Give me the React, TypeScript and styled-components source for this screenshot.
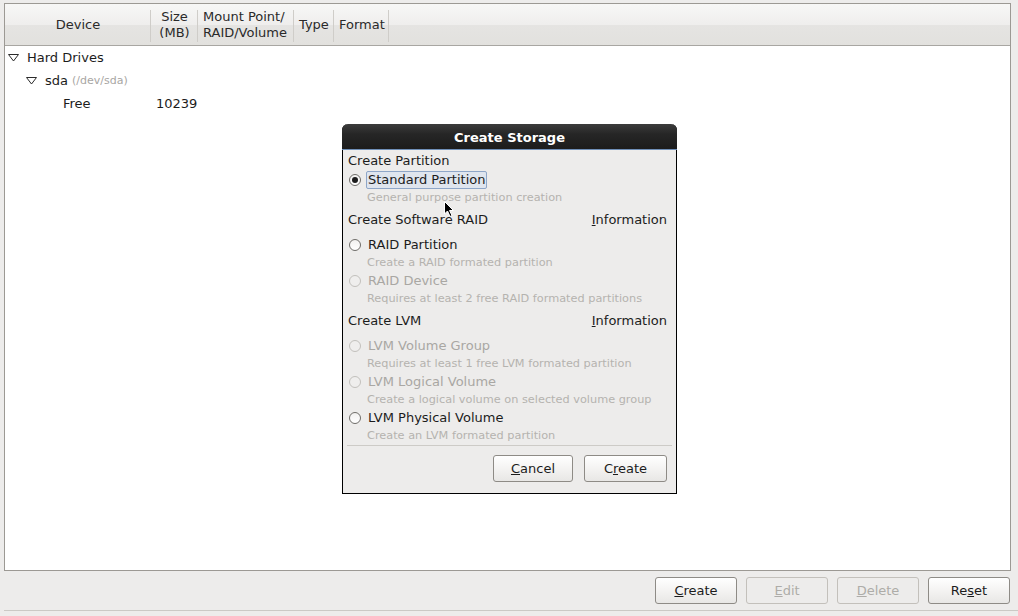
import styled, { createGlobalStyle } from "styled-components";

const GlobalStyle = createGlobalStyle`
  html, body {
    margin: 0;
    padding: 0;
    background: #edeceb;
    font-family: "DejaVu Sans", "Liberation Sans", sans-serif;
    font-size: 13px;
    color: #1c1c1c;
  }
`;

const Screen = styled.div`
  position: relative;
  width: 1018px;
  height: 616px;
  display: flex;
  flex-direction: column;
  overflow: hidden;
`;

const TreeFrame = styled.div`
  flex: 1;
  margin: 3px 7px 0 4px;
  border: 1px solid #9c9994;
  background: #fff;
  display: flex;
  flex-direction: column;
`;

const Header = styled.div`
  height: 41px;
  display: flex;
  background: linear-gradient(#f7f7f6, #efeeed 50%, #e5e4e2 52%, #e2e1de);
  border-bottom: 1px solid #a8a6a2;
`;

const HeaderCell = styled.div<{ $w: number; $center?: boolean }>`
  position: relative;
  width: ${(p) => p.$w}px;
  display: flex;
  flex-direction: column;
  justify-content: center;
  align-items: ${(p) => (p.$center ? "center" : "flex-start")};
  padding-left: ${(p) => (p.$center ? 0 : 5)}px;
  box-sizing: border-box;
  line-height: 16px;
  color: #2a2a2a;
  &::after {
    content: "";
    position: absolute;
    right: 0;
    top: 6px;
    bottom: 3px;
    width: 1px;
    background: #cfcdc9;
  }
`;

const TreeRow = styled.div<{ $indent: number }>`
  height: 23px;
  display: flex;
  align-items: center;
  padding-left: ${(p) => p.$indent}px;
`;

const Expander = styled.svg`
  width: 11px;
  height: 8px;
  margin-right: 8px;
`;

const Cell = styled.span<{ $w?: number }>`
  display: inline-block;
  width: ${(p) => (p.$w ? `${p.$w}px` : "auto")};
`;

const DevPath = styled.span`
  color: #a8a6a3;
  font-size: 11px;
  margin-left: 4px;
`;

const Footer = styled.div`
  height: 40px;
  margin: 0 0 5px 4px;
  padding: 6px 8px 0 0;
  box-sizing: border-box;
  display: flex;
  justify-content: flex-end;
  align-items: flex-start;
  gap: 9px;
  border-bottom: 1px solid #cbc9c5;
`;

const Button = styled.button<{ $w?: number }>`
  width: ${(p) => p.$w ?? 82}px;
  height: 27px;
  border: 1px solid #8e8b86;
  border-radius: 3px;
  background: linear-gradient(#ffffff, #f4f3f2 50%, #e8e7e5);
  font-family: "DejaVu Sans", "Liberation Sans", sans-serif;
  font-size: 13px;
  color: #1c1c1c;
  padding: 0;
  &:disabled {
    border-color: #c3c0bb;
    color: #aeaca8;
    background: #edeceb;
  }
`;

const Dialog = styled.div`
  position: absolute;
  left: 342px;
  top: 124px;
  width: 335px;
  height: 370px;
  box-sizing: border-box;
  border: 1px solid #000;
  border-top: none;
  border-radius: 6px 6px 0 0;
  background: #edeceb;
  display: flex;
  flex-direction: column;
`;

const TitleBar = styled.div`
  height: 24px;
  border-radius: 6px 6px 0 0;
  margin: 0 -1px;
  background: linear-gradient(#3c3c3c, #262626 40%, #1c1c1c);
  border-bottom: 1px solid #6f8fb8;
  color: #fff;
  font-weight: bold;
  display: flex;
  align-items: center;
  justify-content: center;
  padding-top: 1px;
`;

const Body = styled.div`
  padding: 0 9px 0 5px;
  display: flex;
  flex-direction: column;
`;

const SectionLabel = styled.div<{ $first?: boolean }>`
  height: ${(p) => (p.$first ? 20 : 22)}px;
  margin-top: ${(p) => (p.$first ? 0 : 2)}px;
  margin-bottom: ${(p) => (p.$first ? 0 : 5)}px;
  display: flex;
  align-items: center;
  justify-content: space-between;
`;

const RadioRow = styled.div<{ $disabled?: boolean }>`
  height: 19px;
  display: flex;
  align-items: center;
  padding-left: 1px;
  color: ${(p) => (p.$disabled ? "#a9a7a3" : "#1c1c1c")};
`;

const RadioCircle = styled.span<{ $checked?: boolean; $disabled?: boolean }>`
  width: 12px;
  height: 12px;
  box-sizing: border-box;
  border-radius: 50%;
  border: 1px solid ${(p) => (p.$disabled ? "#c2c0bc" : "#6f6d69")};
  background: ${(p) => (p.$disabled ? "#efeeed" : "linear-gradient(#f2f1f0, #ffffff)")};
  margin-right: 5px;
  display: flex;
  align-items: center;
  justify-content: center;
  &::after {
    content: "";
    display: ${(p) => (p.$checked ? "block" : "none")};
    width: 6px;
    height: 6px;
    border-radius: 50%;
    background: #1c1c1c;
  }
`;

const RadioLabel = styled.span<{ $focus?: boolean }>`
  padding: 0 1px;
  line-height: 16px;
  border: 1px solid ${(p) => (p.$focus ? "#8ea6c8" : "transparent")};
  border-radius: 2px;
  background: ${(p) => (p.$focus ? "#dfe5ee" : "transparent")};
`;

const Desc = styled.div`
  height: 17px;
  display: flex;
  align-items: center;
  padding-left: 19px;
  font-size: 11.3px;
  color: #b5b3af;
`;

const Separator = styled.div`
  height: 1px;
  background: #cdcbc7;
  margin: 1px -5px 0 -1px;
`;

const DialogButtons = styled.div`
  display: flex;
  justify-content: flex-end;
  gap: 11px;
  padding-top: 9px;
`;

const Cursor = styled.svg`
  position: absolute;
  left: 444px;
  top: 201px;
  width: 11px;
  height: 17px;
`;

const TriDown = () => (
  <Expander viewBox="0 0 11 8">
    <polygon points="0.5,0.5 10.5,0.5 5.5,7" fill="#fff" stroke="#2a2a2a" strokeWidth="1" />
  </Expander>
);

const App = () => {
  return (
    <>
      <GlobalStyle />
      <Screen>
        <TreeFrame>
          <Header>
            <HeaderCell $w={146} $center>Device</HeaderCell>
            <HeaderCell $w={47} $center>
              <span>Size</span>
              <span>(MB)</span>
            </HeaderCell>
            <HeaderCell $w={96}>
              <span>Mount Point/</span>
              <span>RAID/Volume</span>
            </HeaderCell>
            <HeaderCell $w={40}>Type</HeaderCell>
            <HeaderCell $w={55}>Format</HeaderCell>
          </Header>
          <TreeRow $indent={3}>
            <TriDown />
            Hard Drives
          </TreeRow>
          <TreeRow $indent={21}>
            <TriDown />
            sda<DevPath>(/dev/sda)</DevPath>
          </TreeRow>
          <TreeRow $indent={58}>
            <Cell $w={93}>Free</Cell>
            <Cell>10239</Cell>
          </TreeRow>
        </TreeFrame>
        <Footer>
          <Button><u>C</u>reate</Button>
          <Button disabled><u>E</u>dit</Button>
          <Button disabled><u>D</u>elete</Button>
          <Button>Re<u>s</u>et</Button>
        </Footer>

        <Dialog>
          <TitleBar>Create Storage</TitleBar>
          <Body>
            <SectionLabel $first>Create Partition</SectionLabel>
            <RadioRow>
              <RadioCircle $checked />
              <RadioLabel $focus>Standard Partition</RadioLabel>
            </RadioRow>
            <Desc>General purpose partition creation</Desc>

            <SectionLabel>
              <span>Create Software RAID</span>
              <span><u>I</u>nformation</span>
            </SectionLabel>
            <RadioRow>
              <RadioCircle />
              <RadioLabel>RAID Partition</RadioLabel>
            </RadioRow>
            <Desc>Create a RAID formated partition</Desc>
            <RadioRow $disabled>
              <RadioCircle $disabled />
              <RadioLabel>RAID Device</RadioLabel>
            </RadioRow>
            <Desc>Requires at least 2 free RAID formated partitions</Desc>

            <SectionLabel>
              <span>Create LVM</span>
              <span><u>I</u>nformation</span>
            </SectionLabel>
            <RadioRow $disabled>
              <RadioCircle $disabled />
              <RadioLabel>LVM Volume Group</RadioLabel>
            </RadioRow>
            <Desc>Requires at least 1 free LVM formated partition</Desc>
            <RadioRow $disabled>
              <RadioCircle $disabled />
              <RadioLabel>LVM Logical Volume</RadioLabel>
            </RadioRow>
            <Desc>Create a logical volume on selected volume group</Desc>
            <RadioRow>
              <RadioCircle />
              <RadioLabel>LVM Physical Volume</RadioLabel>
            </RadioRow>
            <Desc>Create an LVM formated partition</Desc>
            <Separator />
            <DialogButtons>
              <Button $w={80}><u>C</u>ancel</Button>
              <Button $w={83}>C<u>r</u>eate</Button>
            </DialogButtons>
          </Body>
        </Dialog>

        <Cursor viewBox="0 0 11 17">
          <path d="M0.5 0.5 L0.5 13 L3.5 10 L6 15.5 L8 14.5 L5.5 9.5 L9.5 9.5 Z" fill="#000" stroke="#fff" strokeWidth="1" />
        </Cursor>
      </Screen>
    </>
  );
};

export default App;
